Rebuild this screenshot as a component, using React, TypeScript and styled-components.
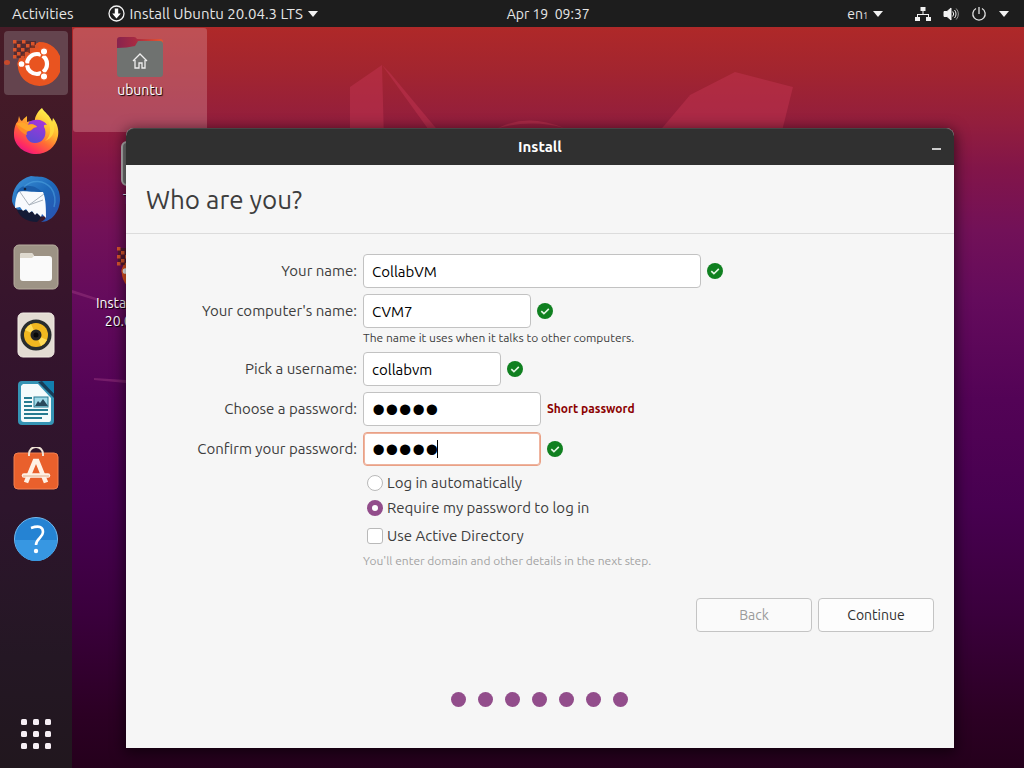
import { useState } from "react";
import type { ReactNode } from "react";
import styled, { createGlobalStyle, css } from "styled-components";

const GlobalStyle = createGlobalStyle`
  * {
    box-sizing: border-box;
  }

  body {
    margin: 0;
    font-family: Ubuntu, "Noto Sans", "Open Sans", sans-serif;
    font-size: 15px;
    line-height: 20px;
    color: #3d3d3d;
  }

  button,
  input {
    font-family: inherit;
    font-size: inherit;
  }
`;

const Screen = styled.div`
  position: relative;
  display: flex;
  flex-direction: column;
  min-height: 100vh;
  overflow: hidden;
  background: linear-gradient(
    180deg,
    #b02928 3%,
    #a3252f 9%,
    #931e3d 16%,
    #821549 22%,
    #721158 30%,
    #640b5c 39%,
    #530356 52%,
    #470050 66%,
    #3a003c 80%,
    #2c0024 93%,
    #25001c 100%
  );
`;

const Wallpaper = styled.svg`
  position: absolute;
  top: 0;
  left: 0;
  width: 100%;
  height: 100%;
`;

const TopBar = styled.header`
  position: relative;
  display: grid;
  grid-template-columns: 7fr auto 6fr;
  align-items: center;
  height: 27px;
  background: #1d1d1d;
  color: #e6e6e6;
`;

const BarGroup = styled.div<{ $end?: boolean }>`
  display: flex;
  align-items: center;
  justify-content: ${({ $end }) => ($end ? "flex-end" : "flex-start")};
  gap: ${({ $end }) => ($end ? "12px" : "34px")};
  padding: ${({ $end }) => ($end ? "0 15px 0 0" : "0 0 0 12px")};
`;

const BarButton = styled.button`
  display: flex;
  align-items: center;
  gap: 5px;
  padding: 0;
  border: 0;
  background: none;
  color: inherit;
  line-height: 20px;
  white-space: pre;

  sub {
    font-size: 9px;
    line-height: 8px;
    vertical-align: baseline;
  }
`;

const Clock = styled(BarButton)`
  font-size: 14px;
`;

const LanguageButton = styled(BarButton)`
  margin-right: 20px;
  font-size: 14px;
`;

const Main = styled.div`
  position: relative;
  display: flex;
  flex: 1;
`;

const Dock = styled.nav`
  display: flex;
  flex-direction: column;
  align-items: center;
  gap: 4px;
  width: 72px;
  padding: 4px 0 2px;
  background: linear-gradient(#481b27, #3f1928 18%, #35142d 40%, #2d152c 65%, #241724 85%, #21171e);
`;

const DockItem = styled.button<{ $active?: boolean; $last?: boolean }>`
  position: relative;
  display: flex;
  align-items: center;
  justify-content: center;
  width: 64px;
  height: 64px;
  padding: 0;
  border: 0;
  border-radius: 4px;
  background: ${({ $active }) => ($active ? "#64444e" : "none")};
  ${({ $last }) => $last && "margin-top: auto;"}

  ${({ $active }) =>
    $active &&
    css`
      &::before {
        content: "";
        position: absolute;
        top: 29px;
        left: 0;
        width: 6px;
        height: 5px;
        border-radius: 50%;
        background: #c8492b;
      }
    `}
`;

const Desktop = styled.main`
  position: relative;
  flex: 1;
  padding: 1px;
`;

const DesktopIcons = styled.div`
  display: flex;
  flex-direction: column;
  gap: 2px;
  width: 134px;
`;

const DesktopIcon = styled.button<{ $selected?: boolean }>`
  display: flex;
  flex-direction: column;
  align-items: center;
  min-height: 104px;
  padding: 6px 16px 0;
  border: 0;
  border-radius: 3px;
  background: ${({ $selected }) => ($selected ? "rgba(214, 140, 150, 0.4)" : "none")};
  color: #fff;
  font-size: 14px;
  line-height: 18px;
  text-shadow: 1px 1px 1px #000;
`;

const InstallWindow = styled.section`
  position: absolute;
  top: 101px;
  right: 70px;
  bottom: 20px;
  left: 54px;
  display: flex;
  flex-direction: column;
  border-radius: 8px 8px 0 0;
  background: #f6f6f6;
  box-shadow: 0 3px 14px 2px rgba(0, 0, 0, 0.55);
`;

const TitleBar = styled.div`
  display: grid;
  grid-template-columns: 1fr auto 1fr;
  align-items: center;
  height: 37px;
  padding: 0 13px;
  border-top: 1px solid #444;
  border-radius: 8px 8px 0 0;
  background: #303030;
  color: #fff;
  font-weight: 700;
`;

const MinimizeButton = styled.button`
  grid-column: 3;
  justify-self: end;
  display: flex;
  padding: 3px 0 0;
  border: 0;
  background: none;
`;

const Heading = styled.h1`
  margin: 0;
  padding: 17px 20px 16px;
  border-bottom: 1px solid #dcdcdc;
  font-size: 26px;
  font-weight: 400;
  line-height: 35px;
`;

const Form = styled.form`
  display: flex;
  flex: 1;
  flex-direction: column;
  padding: 20px 20px 41px 0;
`;

const Fields = styled.div`
  display: grid;
  grid-template-columns: 231px 1fr;
  gap: 6px;
`;

const FieldLabel = styled.label`
  height: 34px;
  line-height: 34px;
  text-align: right;
`;

const Control = styled.div`
  display: flex;
  align-items: center;
  gap: 6px;
`;

const InputWrap = styled.div<{ $width: number }>`
  position: relative;
  width: ${({ $width }) => $width}px;
`;

const TextInput = styled.input<{ $active?: boolean }>`
  display: block;
  width: 100%;
  height: 34px;
  padding: 0 8px;
  border: 1px solid #c2c2c2;
  border-radius: 4px;
  outline: 0;
  background: #fff;
  color: #000;

  &[type="password"] {
    padding: 2px 8px 0;
    font-family: "Liberation Sans", sans-serif;
    font-size: 38px;
    line-height: 30px;
  }

  ${({ $active }) =>
    $active &&
    css`
      border-color: #e9a186;
      box-shadow: inset 0 0 0 1px #efb49f;
    `}
`;

const Caret = styled.span`
  position: absolute;
  top: 8px;
  left: 74px;
  width: 1px;
  height: 18px;
  background: #000;
`;

const Hint = styled.p<{ $muted?: boolean }>`
  margin: 0;
  font-size: 12px;
  line-height: 20px;
  height: 18px;
  color: ${({ $muted }) => ($muted ? "#a3a3a3" : "#3d3d3d")};
`;

const Warning = styled.strong`
  color: #8b0000;
  font-size: 12px;
`;

const Options = styled.div`
  grid-column: 2;
  display: flex;
  flex-direction: column;
  gap: 3px;
`;

const Option = styled.label`
  display: flex;
  align-items: center;
  gap: 4px;
  height: 22px;
  padding-left: 4px;
`;

const OptionInput = styled.input`
  appearance: none;
  width: 16px;
  height: 16px;
  margin: 0;
  border: 1px solid #b9b9b9;
  border-radius: ${({ type }) => (type === "radio" ? "50%" : "3px")};
  background: #fff;

  &:checked {
    border: 5px solid #924d8b;
  }
`;

const Directory = styled.div`
  display: flex;
  flex-direction: column;
  gap: 4px;
  padding-top: 3px;
`;

const Actions = styled.div`
  display: flex;
  justify-content: flex-end;
  gap: 6px;
  margin-top: 29px;
`;

const ActionButton = styled.button`
  width: 116px;
  height: 34px;
  border: 1px solid #c4c4c4;
  border-radius: 4px;
  background: #fdfdfd;
  color: #2f2f2f;
  font-size: 14px;

  &:disabled {
    background: #fafafa;
    color: #9b9b9b;
  }
`;

const Steps = styled.div`
  display: flex;
  justify-content: center;
  gap: 12px;
  margin-top: auto;
  padding-left: 18px;
`;

const Step = styled.span`
  width: 15px;
  height: 15px;
  border-radius: 50%;
  background: #924d8b;
`;

const ArrowDown = () => (
  <svg width="10" height="6" viewBox="0 0 10 6" fill="#f2f2f2">
    <path d="M0 0h10L5 6z" />
  </svg>
);

const InstallerBadge = () => (
  <svg width="17" height="17" viewBox="0 0 17 17">
    <circle cx="8.5" cy="8.5" r="7.5" fill="none" stroke="#f2f2f2" strokeWidth="1.3" />
    <path d="M6.8 3.5h3.4v5h2.6l-4.3 5-4.3-5h2.6z" fill="#fff" />
  </svg>
);

const NetworkIcon = () => (
  <svg width="16" height="16" viewBox="0 0 16 16" fill="#f2f2f2">
    <path d="M5.5 1h5v4h-2v3H14v3h2v4h-5v-4h2V9H3v2h2v4H0v-4h2V8h5.5V5h-2z" />
  </svg>
);

const VolumeIcon = () => (
  <svg width="16" height="16" viewBox="0 0 16 16" fill="none" stroke="#f2f2f2">
    <path d="M1 5.5h3L8 2v12l-4-3.5H1z" fill="#f2f2f2" />
    <path d="M9.7 5.5a4 4 0 010 5M11.5 4a6 6 0 010 8" />
    <path d="M13.200 2.500a8 8 0 010 11" stroke="#999" />
  </svg>
);

const PowerIcon = () => (
  <svg width="16" height="16" viewBox="0 0 16 16" fill="none" stroke="#e2e2e2" strokeWidth="1.3">
    <path d="M5 2.5a6.2 6.2 0 106 0M8 1v7" />
  </svg>
);

const CheckMark = () => (
  <svg width="16" height="16" viewBox="0 0 16 16">
    <circle cx="8" cy="8" r="8" fill="#108020" />
    <path d="M4.3 8.2l2.6 2.5 4.9-4.8" fill="none" stroke="#e7f6e7" strokeWidth="1.6" />
  </svg>
);

const pixels = [
  [0, 0], [9, 0], [18, 2], [4, 4], [13, 4], [22, 5], [0, 8], [8, 8],
  [17, 8], [4, 12], [12, 12], [0, 15], [8, 16],
];

const UbuntuIcon = () => (
  <svg width="48" height="48" viewBox="0 0 48 48">
    <path d="M27 3a22 22 0 11-20 30C4 24 7 18 11 15l9-8z" fill="#e95420" />
    <path d="M2 2h22v7h-6v5h-5v5H2z" fill="#4b2020" opacity=".65" />
    {pixels.map(([x, y]) => (
      <rect key={`${x}-${y}`} x={x + 1} y={y + 1} width="3.5" height="3.5" fill="#d9552c" />
    ))}
    <circle cx="25" cy="25" r="10" fill="none" stroke="#fff" strokeWidth="4.2" strokeDasharray="19 1.94" strokeDashoffset="-11" />
    <g fill="#fff" stroke="#e95420" strokeWidth="1.3">
      <circle cx="9.5" cy="25" r="3.5" />
      <circle cx="32" cy="12.5" r="3.7" />
      <circle cx="32" cy="37.5" r="3.7" />
    </g>
  </svg>
);

const FirefoxIcon = () => (
  <svg width="48" height="48" viewBox="0 0 48 48">
    <defs>
      <linearGradient id="foxBody" x1=".8" y1=".1" x2=".25" y2="1">
        <stop offset="0" stopColor="#fff44f" />
        <stop offset=".35" stopColor="#ffb52e" />
        <stop offset=".6" stopColor="#ff6b35" />
        <stop offset=".85" stopColor="#ff2c62" />
        <stop offset="1" stopColor="#e31587" />
      </linearGradient>
      <linearGradient id="foxGlobe" x1=".7" y1="0" x2=".3" y2="1">
        <stop offset="0" stopColor="#a535db" />
        <stop offset="1" stopColor="#5b4bd2" />
      </linearGradient>
    </defs>
    <path d="M30 1c2 4 8 7 10 14l1-4c5 6 6 13 5 18-2 11-11 18-22 18S2 39 2 28c0-6 1-11 4-14l1-5c1 3 1 4 3 5 2-3 4-4 5-5v6c4-1 6 0 8 1-1-5 2-11 7-15z" fill="url(#foxBody)" />
    <path d="M17 15c7-4 15-2 18 3-3-1-4 0-2 4 2 8-3 14-10 14-6 0-10-5-9-11z" fill="url(#foxGlobe)" />
    <path d="M4 17c5-3 9-2 12 1 4-2 8 0 9 2-4 0-4 3-7 4-3 0-4 1-3 4-5-2-9-6-11-11z" fill="#ff8b27" />
    <path d="M4 17c5-3 9-2 12 1 4-2 8 0 9 2-5 0-5 3-9 4C11 22 7 18 4 17z" fill="#ffa62b" />
    <path d="M29 4c2 5 8 7 9 17 1 6-2 11-5 13 7-3 10-8 9-15C41 12 34 9 29 4z" fill="#ffdf3f" opacity=".75" />
  </svg>
);

const ThunderbirdIcon = () => (
  <svg width="48" height="48" viewBox="0 0 48 48">
    <defs>
      <linearGradient id="birdBody" x1="0" y1="0" x2="1" y2="1">
        <stop offset="0" stopColor="#3f94d8" />
        <stop offset=".5" stopColor="#1e69ba" />
        <stop offset="1" stopColor="#2b4fb0" />
      </linearGradient>
    </defs>
    <path d="M19 1c6 1 11 0 15 2 9 4 14 11 14 21 0 12-8 23-19 23 3-2 5-3 5-6C23 44 2 38 0 26 0 15 6 4 19 1z" fill="url(#birdBody)" />
    <path d="M5 35c7-1 21 2 25 7l-5 5C16 47 8 43 5 35z" fill="#141a35" />
    <path d="M7 16l24 1c3 7 3 17 3 26l-4-4-1 3-4-4-2 2-3-4-3 2-3-4-3 2-3-4-5 1c0-7 1-12 4-17z" fill="#f8fafd" />
    <path d="M8 17l9 13 15-11M17 30l14-5" fill="none" stroke="#aab3bd" />
    <path d="M4 19c3-7 8-9 14-8 5 0 8 3 13 6-9 0-15-1-20-1-3 0-5 1-7 3z" fill="#1b5daa" />
    <path d="M12 12c8-8 20-7 27 1 4 5 5 13 3 19" fill="none" stroke="#54a9e4" strokeWidth="1.5" opacity=".5" />
    <circle cx="13" cy="14" r="1.3" fill="#12223d" />
  </svg>
);

const FilesIcon = () => (
  <svg width="48" height="48" viewBox="0 0 48 48">
    <rect x="2" y="2" width="44" height="44" rx="5" fill="#9d9385" stroke="#b8ae9f" />
    <path d="M8 15V12q0-2 2-2h9q2 0 3 3h15q3 0 3 3v19q0 3-3 3H11q-3 0-3-3z" fill="#fafafa" />
    <path d="M8 15V12q0-2 2-2h9q2 0 3 3l-2 2z" fill="#ded9ce" />
  </svg>
);

const RhythmboxIcon = () => (
  <svg width="48" height="48" viewBox="0 0 48 48">
    <rect x="6" y="2" width="36" height="44" rx="5" fill="#e3dcd3" stroke="#f2ece5" />
    <circle cx="24" cy="24" r="15.5" fill="#282d2e" />
    <circle cx="24" cy="24" r="12" fill="#f0b820" />
    <path d="M24 24L13 19a12 12 0 016-6zM24 24l11 5a12 12 0 01-6 6z" fill="#ffdc58" />
    <circle cx="24" cy="24" r="5.5" fill="#242424" />
    <circle cx="24" cy="24" r="2.5" fill="#080808" />
  </svg>
);

const WriterIcon = () => (
  <svg width="48" height="48" viewBox="0 0 48 48">
    <path d="M10 2h19l13 14v26q0 4-4 4H10q-4 0-4-4V6q0-4 4-4z" fill="#3594b5" />
    <path d="M28 2h14v13z" fill="#137eae" />
    <path d="M11 5h15l13 14v21q0 3-2 3H12q-3 0-3-3V7z" fill="#f4fbfc" />
    <path d="M26 3l16 16v-4L30 2z" fill="#183d58" />
    <path d="M12 19h8M12 23h8M12 27h8M12 31h24M12 35h24M12 39h18" stroke="#267b91" strokeWidth="2" />
    <rect x="22" y="18" width="14" height="10" fill="#9fd8e7" stroke="#267b91" />
    <path d="M23 27l3-5 2 2 3-4 5 7z" fill="#28495c" />
  </svg>
);

const SoftwareIcon = () => (
  <svg width="48" height="48" viewBox="0 0 48 48">
    <rect x="2" y="6" width="44" height="36" rx="4" fill="#e9602c" stroke="#f38050" />
    <path d="M17 9V7a7 7 0 0114 0v2" fill="none" stroke="#eee1d4" strokeWidth="2" />
    <path d="M14 35.500L22.800 14h2.400L34 35.500" fill="none" stroke="#fff1e5" strokeWidth="4.600" />
    <path d="M12 28.500h24" stroke="#fff1e5" strokeWidth="4.500" strokeLinecap="round" />
    <path d="M11 29h26" stroke="#dfae8b" />
  </svg>
);

const HelpIcon = () => (
  <svg width="48" height="48" viewBox="0 0 48 48">
    <circle cx="24" cy="24" r="21.5" fill="#2583d3" stroke="#72baf0" />
    <path d="M3 25h42A21 21 0 013 25z" fill="#3797e2" />
    <path d="M19 13q12-4 12 4c0 6-7 6-7 13" fill="none" stroke="#fff" strokeWidth="2.600" />
    <circle cx="24" cy="36" r="2.2" fill="#fff" />
  </svg>
);

const AppsIcon = () => (
  <svg width="48" height="48" viewBox="0 0 48 48" fill="#f6eef4">
    {[9, 21, 33].map((y) =>
      [9, 21, 33].map((x) => <rect key={`${x}-${y}`} x={x} y={y} width="6" height="6" rx="1.5" />)
    )}
  </svg>
);

const HomeFolderIcon = () => (
  <svg width="48" height="47" viewBox="0 0 48 47">
    <defs>
      <linearGradient id="folderBack">
        <stop offset="0" stopColor="#87234e" />
        <stop offset=".4" stopColor="#a72a42" />
        <stop offset="1" stopColor="#e95630" />
      </linearGradient>
    </defs>
    <path d="M1 14V6q0-3 3-3h14q2 0 3 2h23q3 0 3 3v10H1z" fill="url(#folderBack)" />
    <path d="M1 14q10 0 18-2l3-5h22q3 0 3 3v30q0 3-3 3H4q-3 0-3-3z" fill="#6f7270" />
    <path d="M17 27l7-7 7 7M19 26v8h4v-5h3v5h3v-8" fill="none" stroke="#eee" strokeWidth="1.3" />
  </svg>
);

const TrashIcon = () => (
  <svg width="48" height="50" viewBox="0 0 48 50">
    <rect x="6" y="2" width="36" height="43" rx="5" fill="#777" stroke="#b8b8b8" strokeWidth="2" />
  </svg>
);

const dockItems: { name: string; icon: ReactNode }[] = [
  { name: "Install Ubuntu", icon: <UbuntuIcon /> },
  { name: "Firefox", icon: <FirefoxIcon /> },
  { name: "Thunderbird", icon: <ThunderbirdIcon /> },
  { name: "Files", icon: <FilesIcon /> },
  { name: "Rhythmbox", icon: <RhythmboxIcon /> },
  { name: "LibreOffice Writer", icon: <WriterIcon /> },
  { name: "Ubuntu Software", icon: <SoftwareIcon /> },
  { name: "Help", icon: <HelpIcon /> },
];

interface FieldProps {
  id: string;
  label: string;
  width: number;
  initial: string;
  type?: string;
  active?: boolean;
  status?: ReactNode;
  hint?: string;
}

const Field = ({ id, label, width, initial, type = "text", active, status = <CheckMark />, hint }: FieldProps) => {
  const [value, setValue] = useState(initial);

  return (
    <>
      <FieldLabel htmlFor={id}>{label}</FieldLabel>
      <div>
        <Control>
          <InputWrap $width={width}>
            <TextInput
              id={id}
              type={type}
              value={value}
              $active={active}
              onChange={(e) => setValue(e.target.value)}
            />
            {active && <Caret />}
          </InputWrap>
          {status}
        </Control>
        {hint && <Hint>{hint}</Hint>}
      </div>
    </>
  );
};

const App = () => {
  const [login, setLogin] = useState("password");
  const [directory, setDirectory] = useState(false);

  return (
    <Screen>
      <GlobalStyle />
      <Wallpaper viewBox="0 0 1024 768" preserveAspectRatio="none">
        <g fill="#c23450" opacity=".5">
          <path d="M350 140V87l32-22 2 75z" />
          <path d="M382 65l8 8 50 60h-9z" />
          <path d="M672 135l18-40 45-23 58 15-12 48z" />
          <path d="M658 133l32-38-12 38z" />
          <path d="M498 128q30-15 66 0-30-9-66 0z" />
        </g>
        <path d="M72 290l55 18v2l-55-17zM94 378l32 2v3l-32-3z" fill="#a64088" opacity=".4" />
      </Wallpaper>
      <TopBar>
        <BarGroup>
          <BarButton>Activities</BarButton>
          <BarButton>
            <InstallerBadge />
            Install Ubuntu 20.04.3 LTS
            <ArrowDown />
          </BarButton>
        </BarGroup>
        <Clock>{"Apr 19  09:37"}</Clock>
        <BarGroup $end>
          <LanguageButton>
            <span>
              en<sub>1</sub>
            </span>
            <ArrowDown />
          </LanguageButton>
          <NetworkIcon />
          <VolumeIcon />
          <PowerIcon />
          <ArrowDown />
        </BarGroup>
      </TopBar>
      <Main>
        <Dock>
          {dockItems.map(({ name, icon }, index) => (
            <DockItem key={name} aria-label={name} $active={index === 0}>
              {icon}
            </DockItem>
          ))}
          <DockItem aria-label="Show Applications" $last>
            <AppsIcon />
          </DockItem>
        </Dock>
        <Desktop>
          <DesktopIcons>
            <DesktopIcon $selected>
              <HomeFolderIcon />
              ubuntu
            </DesktopIcon>
            <DesktopIcon>
              <TrashIcon />
              Trash
            </DesktopIcon>
            <DesktopIcon>
              <UbuntuIcon />
              Install Ubuntu 20.04.3 LTS
            </DesktopIcon>
          </DesktopIcons>
          <InstallWindow>
            <TitleBar>
              <span />
              Install
              <MinimizeButton aria-label="Minimize">
                <svg width="9" height="2">
                  <path d="M0 1h9" stroke="#fff" strokeWidth="1.5" />
                </svg>
              </MinimizeButton>
            </TitleBar>
            <Heading>Who are you?</Heading>
            <Form onSubmit={(e) => e.preventDefault()}>
              <Fields>
                <Field id="name" label="Your name:" width={338} initial="CollabVM" />
                <Field
                  id="computer"
                  label="Your computer's name:"
                  width={168}
                  initial="CVM7"
                  hint="The name it uses when it talks to other computers."
                />
                <Field id="username" label="Pick a username:" width={138} initial="collabvm" />
                <Field
                  id="password"
                  label="Choose a password:"
                  width={178}
                  initial="abcde"
                  type="password"
                  status={<Warning>Short password</Warning>}
                />
                <Field
                  id="confirm"
                  label="Confirm your password:"
                  width={178}
                  initial="abcde"
                  type="password"
                  active
                />
                <Options>
                  <Option>
                    <OptionInput
                      type="radio"
                      name="login"
                      checked={login === "auto"}
                      onChange={() => setLogin("auto")}
                    />
                    Log in automatically
                  </Option>
                  <Option>
                    <OptionInput
                      type="radio"
                      name="login"
                      checked={login === "password"}
                      onChange={() => setLogin("password")}
                    />
                    Require my password to log in
                  </Option>
                  <Directory>
                    <Option>
                      <OptionInput
                        type="checkbox"
                        checked={directory}
                        onChange={(e) => setDirectory(e.target.checked)}
                      />
                      Use Active Directory
                    </Option>
                    <Hint $muted>You'll enter domain and other details in the next step.</Hint>
                  </Directory>
                </Options>
              </Fields>
              <Actions>
                <ActionButton type="button" disabled>
                  Back
                </ActionButton>
                <ActionButton type="submit">Continue</ActionButton>
              </Actions>
              <Steps>
                {Array.from({ length: 7 }, (_, i) => (
                  <Step key={i} />
                ))}
              </Steps>
            </Form>
          </InstallWindow>
        </Desktop>
      </Main>
    </Screen>
  );
};

export default App;
